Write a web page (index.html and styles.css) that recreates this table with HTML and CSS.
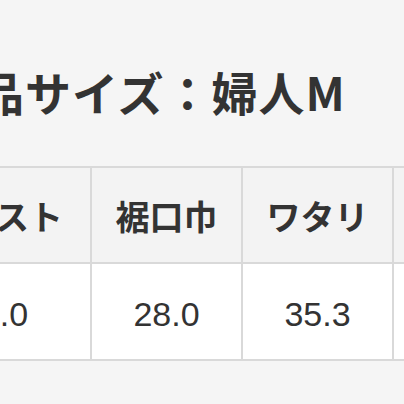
FILE: index.html
```html
<!DOCTYPE html>
<html lang="ja">
<head>
<meta charset="utf-8">
<link rel="stylesheet" href="styles.css">
</head>
<body>
<div class="page">
  <h2 class="title">商品サイズ：婦人M</h2>
  <div class="size-table">
    <div class="cell head">ウエスト</div>
    <div class="cell head">裾口巾</div>
    <div class="cell head">ワタリ</div>
    <div class="cell head">股上</div>
    <div class="cell val">64.0</div>
    <div class="cell val">28.0</div>
    <div class="cell val">35.3</div>
    <div class="cell val">27.5</div>
  </div>
</div>
</body>
</html>
```

FILE: styles.css
```css
html, body {
  margin: 0;
  padding: 0;
  background: #f5f5f5;
  width: 404px;
  height: 404px;
  overflow: hidden;
}
.page {
  font-family: "Noto Sans CJK JP", "Liberation Sans", sans-serif;
  color: #333333;
}
.title {
  margin: 0 0 52px -69px;
  padding-top: 68px;
  font-size: 46px;
  line-height: 46px;
  letter-spacing: 1px;
  font-weight: 700;
  white-space: nowrap;
}
.size-table {
  display: grid;
  grid-template-columns: 190px 149px 149px 149px;
  grid-template-rows: 94px 95px;
  gap: 2px;
  padding: 2px;
  background: #d9d9d9;
  width: max-content;
  margin-left: -102px;
}
.cell {
  display: flex;
  align-items: center;
  justify-content: center;
  white-space: nowrap;
}
.head {
  background: #f3f3f3;
  font-weight: 700;
  font-size: 34px;
}
.val {
  background: #ffffff;
  font-family: "Liberation Sans", "Noto Sans CJK JP", sans-serif;
  font-size: 34px;
  padding-top: 5px;
  box-sizing: border-box;
}
```
